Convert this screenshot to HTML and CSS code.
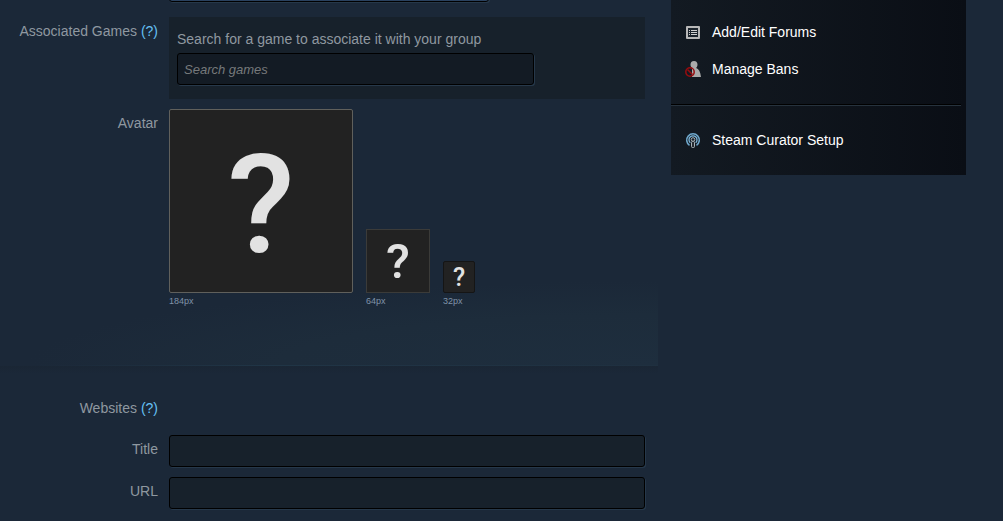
FILE: index.html
```
<!DOCTYPE html>
<html lang="en">
<head>
<meta charset="utf-8">
<title>Edit Group</title>
<link rel="stylesheet" href="styles.css">
</head>

<body>
<div class="page">

<form class="main">
  <div class="section profile">
    <div class="row cut">
      <span></span>
      <select class="field language" aria-label="Language"><option></option></select>
    </div>

    <div class="row games">
      <label class="name" for="games">Associated Games <a href="#">(?)</a></label>
      <div class="panel">
        <p>Search for a game to associate it with your group</p>
        <input class="field search" id="games" type="text" placeholder="Search games">
      </div>
    </div>

    <div class="row avatar-row">
      <span class="name">Avatar</span>
      <div class="avatars">
        <div class="avatar"><div class="pic large">?</div>184px</div>
        <div class="avatar"><div class="pic medium">?</div>64px</div>
        <div class="avatar"><div class="pic small">?</div>32px</div>
      </div>
    </div>
  </div>

  <div class="section websites">
    <div class="row">
      <span class="name">Websites <a href="#">(?)</a></span>
    </div>
    <div class="row">
      <label class="name" for="title">Title</label>
      <input class="field" id="title" type="text">
    </div>
    <div class="row">
      <label class="name" for="url">URL</label>
      <input class="field" id="url" type="text">
    </div>
  </div>
</form>

<nav class="sidebar">
  <a href="#">
    <svg width="16" height="16" viewBox="0 0 16 16">
      <rect x="1" y="2" width="14" height="13" rx="1" fill="#b8b8b8"/>
      <rect x="3" y="4" width="10" height="9" fill="#1c242c"/>
      <path d="M4 6.500h1M6 6.500h6M4 8.500h1M6 8.500h6M4 10.500h1M6 10.500h6" stroke="#d0d0d0"/>
    </svg>
    Add/Edit Forums
  </a>
  <a href="#">
    <svg width="16" height="16" viewBox="0 0 16 16">
      <path d="M9 0c2.400 0 3.500 1.600 3.500 3.600 0 1.500-.6 2.700-1.400 3.400 2.600.8 4.300 3.800 4.900 9H7V9V7C6 6.300 5.500 5 5.500 3.600 5.500 1.600 6.600 0 9 0z" fill="#a9a9a9"/>
      <circle cx="5" cy="11" r="4.200" fill="none" stroke="#980c0f" stroke-width="1.500"/>
      <path d="M2.500 8.500l5 5" stroke="#980c0f" stroke-width="1.500"/>
    </svg>
    Manage Bans
  </a>
  <hr>
  <a href="#">
    <svg width="16" height="16" viewBox="0 0 16 16" fill="none">
      <path d="M4.500 13.300a6.300 6.300 0 1 1 7 0" stroke="#6fa8cc" stroke-width="1.600"/>
      <path d="M5.300 10.800a4 4 0 1 1 5.400 0" stroke="#7db6da" stroke-width="1.300"/>
      <circle cx="8" cy="7.500" r="1.800" fill="#1b2229" stroke="#a9b2b8"/>
      <rect x="6.500" y="9.500" width="3" height="6" rx="1" fill="#252a30" stroke="#a9b2b8"/>
    </svg>
    Steam Curator Setup
  </a>
</nav>

</div>
</body>
</html>
```
FILE: styles.css
```
body {
  margin: 0;
  background: #1b2838;
  color: #8f98a0;
  font-family: "Liberation Sans", Arial, sans-serif;
  font-size: 14px;
  line-height: 18px;
}

a {
  color: #66c0f4;
  text-decoration: none;
}

.page {
  display: grid;
  grid-template-columns: 1fr 295px;
  gap: 13px;
  align-items: start;
  padding-right: 37px;
  overflow: hidden;
}

.row {
  display: grid;
  grid-template-columns: 158px 1fr;
  column-gap: 11px;
  padding-right: 13px;
}

.name {
  padding-top: 5px;
  text-align: right;
}

.field {
  box-sizing: border-box;
  width: 100%;
  height: 32px;
  padding: 0 6px;
  border: 1px solid #000;
  border-radius: 3px;
  background: #17212b;
  box-shadow: 1px 1px 0 #26384a;
  color: #bfc5ca;
  font-family: inherit;
  font-size: 13px;
}

.field::placeholder {
  color: #76797b;
  font-style: italic;
}

/* profile */
.profile {
  padding-bottom: 56px;
  border-bottom: 1px solid #1f3343;
  border-image: linear-gradient(to right, #1b2838 5%, #203546 40%, #1f3040) 1;
  background: radial-gradient(ellipse 630px 84px at 100% 100%, #1e2e3e, #1d2c3b 60%, #1b2838) no-repeat;
}

.cut {
  margin-top: -30px;
}

.language {
  width: 320px;
  background: #2a415e;
  appearance: none;
}

.games {
  padding-top: 15px;
}

.panel {
  padding: 13px 8px 14px;
  background: #17212b;
}

.panel p {
  margin: 0 0 5px;
}

.search {
  display: block;
  max-width: 357px;
  background: #131b24;
}

.avatar-row {
  padding-top: 10px;
}

.avatars {
  display: flex;
  align-items: flex-end;
  gap: 13px;
}

.avatar {
  color: #8093a8;
  font-size: 9px;
  line-height: 16px;
}

.pic {
  display: flex;
  box-sizing: border-box;
  align-items: center;
  justify-content: center;
  padding-top: 2px;
  border: 1px solid #3b3b39;
  background: #222;
  color: #e2e2e2;
  font-family: Roboto, sans-serif;
  font-weight: 500;
}

.large {
  width: 184px;
  height: 184px;
  padding-top: 8px;
  border-color: #60605c;
  border-radius: 2px;
  font-size: 138px;
}

.medium {
  width: 64px;
  height: 64px;
  font-size: 49px;
}

.small {
  width: 32px;
  height: 32px;
  border-color: #151515;
  border-radius: 2px;
  font-size: 25px;
}

/* websites */
.websites {
  display: grid;
  gap: 10px;
  padding: 28px 0 12px;
  background: linear-gradient(#1a2634, #1b2838 8px);
}

.websites .row:first-child {
  min-height: 31px;
}

/* sidebar */
.sidebar {
  padding: 13px 0 17px;
  background: linear-gradient(to right, #131a22, #0a0e15);
}

.sidebar a {
  display: flex;
  align-items: center;
  gap: 11px;
  height: 37px;
  padding-left: 14px;
  color: #fff;
}

.sidebar hr {
  margin: 17px 5px 15px 0;
  border: 0;
  border-top: 1px solid #000;
  border-bottom: 1px solid #26323d;
}
```
